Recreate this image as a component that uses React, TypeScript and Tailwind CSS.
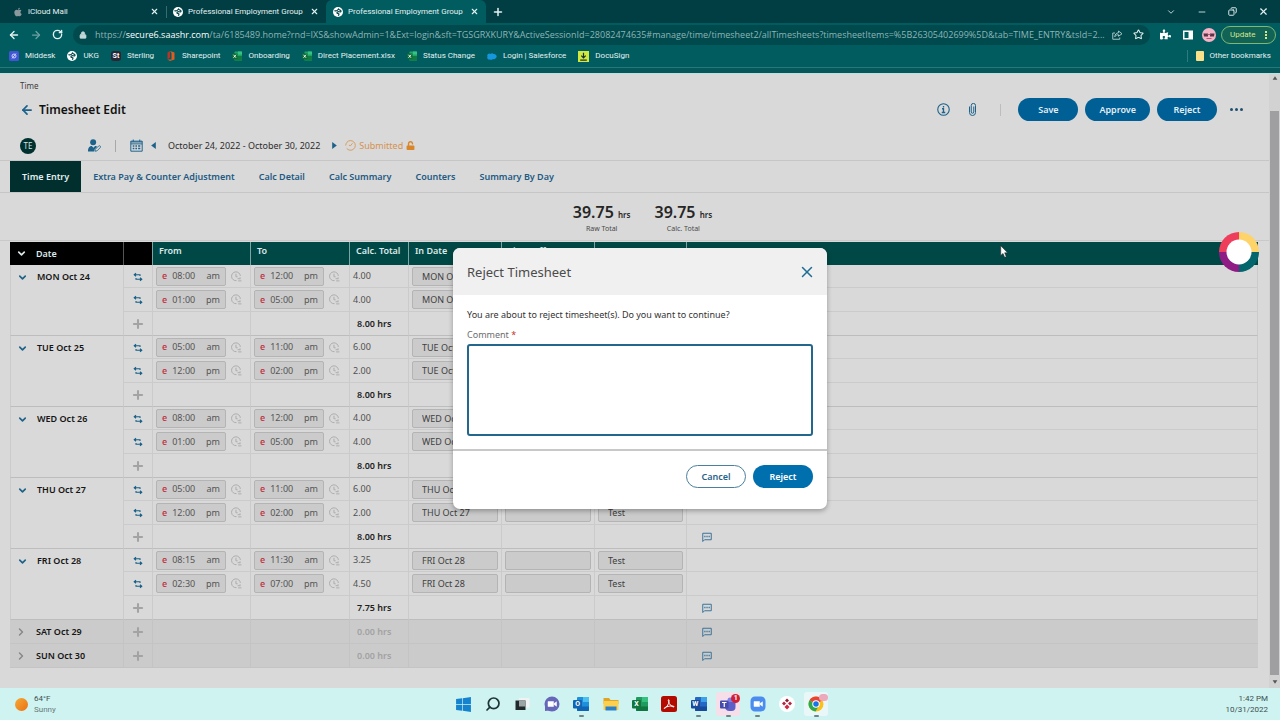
import type { ReactNode } from 'react'
import { FaApple, FaPuzzlePiece, FaUnlock, FaWindows } from 'react-icons/fa'
import {
  ArrowLeft,
  ArrowRight,
  ChevronDown,
  ChevronRight,
  Copy,
  Lock,
  Minus,
  Plus,
  RotateCw,
  Search,
  Star,
  X,
} from 'lucide-react'

type Entry = { from: string; fromHalf: string; to: string; toHalf: string; total: string }
type Day = { date: string; total: string; entries: Entry[] }

const morning = (total: string): Entry => ({ from: '08:00', fromHalf: 'am', to: '12:00', toHalf: 'pm', total })
const afternoon = (total: string): Entry => ({ from: '01:00', fromHalf: 'pm', to: '05:00', toHalf: 'pm', total })
const early = (total: string): Entry => ({ from: '05:00', fromHalf: 'am', to: '11:00', toHalf: 'am', total })
const noon = (total: string): Entry => ({ from: '12:00', fromHalf: 'pm', to: '02:00', toHalf: 'pm', total })

const days: Day[] = [
  { date: 'MON Oct 24', total: '8.00 hrs', entries: [morning('4.00'), afternoon('4.00')] },
  { date: 'TUE Oct 25', total: '8.00 hrs', entries: [early('6.00'), noon('2.00')] },
  { date: 'WED Oct 26', total: '8.00 hrs', entries: [morning('4.00'), afternoon('4.00')] },
  { date: 'THU Oct 27', total: '8.00 hrs', entries: [early('6.00'), noon('2.00')] },
  {
    date: 'FRI Oct 28',
    total: '7.75 hrs',
    entries: [
      { from: '08:15', fromHalf: 'am', to: '11:30', toHalf: 'am', total: '3.25' },
      { from: '02:30', fromHalf: 'pm', to: '07:00', toHalf: 'pm', total: '4.50' },
    ],
  },
]

const weekend = ['SAT Oct 29', 'SUN Oct 30']

const tabs = ['Time Entry', 'Extra Pay & Counter Adjustment', 'Calc Detail', 'Calc Summary', 'Counters', 'Summary By Day']

/* ── Icons ──────────────────────────────────────────── */

function Globe() {
  return (
    <svg viewBox="0 0 20 20" className="size-[10px] shrink-0">
      <circle cx="10" cy="10" r="10" fill="#fff" />
      <path d="M3 7c3 2 6 0 8-3 2 3 6 2 5 5-2 2-5-1-7 1-2 1-1 3 1 3 3 0 2 3 0 4" fill="none" stroke="#08474b" strokeWidth="2.400" />
    </svg>
  )
}

function Sheet() {
  return (
    <svg viewBox="0 0 20 20" className="size-[10px] shrink-0">
      <rect x="5" y="1" width="15" height="18" rx="1" fill="#21a366" />
      <path d="M12 1h7a1 1 0 0 1 1 1v5h-8z" fill="#33c481" />
      <path d="M5 10h15v8a1 1 0 0 1-1 1H6a1 1 0 0 1-1-1z" fill="#107c41" />
      <rect y="5" width="11" height="11" rx="1" fill="#0b6a37" />
      <path d="m3 7.500 5 6m0-6-5 6" stroke="#fff" strokeWidth="1.800" />
    </svg>
  )
}

function Swap() {
  return (
    <svg viewBox="0 0 20 20" className="size-[10px]" fill="none" stroke="#155f88" strokeWidth="2.200">
      <path d="M14 8V5.500H3M6 2.500l-3.500 3L6 8.500M6 12v2.500h11M14 11.500l3.500 3-3.500 3" />
    </svg>
  )
}

function PunchClock() {
  return (
    <svg viewBox="0 0 20 20" className="size-[11px] shrink-0" fill="none" stroke="#a9a9a9" strokeWidth="1.700">
      <path d="M10 17.500A8 8 0 1 1 17 9M9 5v5.500h3M12 14h4M13 18h6M16.500 11.500V15" />
    </svg>
  )
}

function CommentIcon() {
  return (
    <svg viewBox="0 0 20 20" className="size-[10px]" fill="none" stroke="#3c7399" strokeWidth="2">
      <path d="M1.500 19V2.500h17v13H5z" />
      <path d="M4.500 9h2.500m1.800 0h2.500m1.800 0h2.500" strokeWidth="2.800" />
    </svg>
  )
}

function InfoIcon() {
  return (
    <svg viewBox="0 0 26 26" className="size-[13px]" fill="none" stroke="#1c628a" strokeWidth="2.200">
      <circle cx="13" cy="13" r="11.500" />
      <path d="M13 6v3M10 11.500h3V19m-3.500 0h7" strokeWidth="2.600" />
    </svg>
  )
}

function ClipIcon() {
  return (
    <svg viewBox="0 0 14 26" className="h-[13px] w-[7px]" fill="none" stroke="#1c628a" strokeWidth="2">
      <path d="M9.500 7v11a2.500 2.500 0 0 1-5 0V5a4 4 0 0 1 8.500 0v14a5.500 5.500 0 0 1-12 0V7" />
    </svg>
  )
}

function CalendarIcon() {
  return (
    <svg viewBox="0 0 24 24" className="size-[13px]" fill="none" stroke="#1c628a" strokeWidth="1.800">
      <path d="M1.500 4h21v18.500h-21zM1.500 9h21M6 1v4m12-4v4M1.500 5.500h21" />
      <path d="M5 13h3m2 0h3m2 0h4M5 17.500h3m2 0h3m2 0h4" strokeWidth="2.600" />
    </svg>
  )
}

function EmployeeIcon() {
  return (
    <svg viewBox="0 0 24 24" className="size-[13px]">
      <circle cx="9.500" cy="6" r="5.500" fill="#1c628a" />
      <path d="M0 23c0-7 3-10 7-10l3 3 3-3c2 0 3 .5 4 1.500l-5 5-.5 3.500z" fill="#1c628a" />
      <path d="m13.500 19 6-6a2 2 0 0 1 3 3l-6 6-3.500.5z" fill="none" stroke="#1c628a" strokeWidth="1.500" />
    </svg>
  )
}

function SubmittedIcon() {
  return (
    <svg viewBox="0 0 24 24" className="size-[11px]" fill="none" stroke="#d6924f" strokeWidth="1.800">
      <path d="M4 5A10.500 10.500 0 1 1 3.500 18M1.500 12a10 10 0 0 1 3-7" />
      <path d="m16.500 7-4.500 5.500-3.500-1" />
    </svg>
  )
}

/* ── Browser chrome ─────────────────────────────────── */

function BrowserTab({ title, icon, active = false }: { title: string; icon: ReactNode; active?: boolean }) {
  return (
    <div className={`flex h-full w-[160px] items-center gap-[5px] px-[7px] ${active ? 'rounded-t-md bg-[#005c5f]' : ''}`}>
      {icon}
      <span className="min-w-0 flex-1 overflow-hidden whitespace-nowrap">{title}</span>
      <button type="button" aria-label="Close tab">
        <X className="size-[9px]" strokeWidth={3} />
      </button>
    </div>
  )
}

function Bookmark({ label, children }: { label: string; children: ReactNode }) {
  return (
    <a href="#" className="flex items-center gap-[6px] whitespace-nowrap">
      {children}
      {label}
    </a>
  )
}

function Browser() {
  return (
    <header className="bg-[#005c5f] font-['Roboto','Open_Sans',sans-serif] text-[8px] leading-3 text-[#e5f1f1]">
      <div className="flex h-[23px] items-center bg-[#003e44] pl-[6px]">
        <BrowserTab title="iCloud Mail" icon={<FaApple className="size-[10px] text-[#8a999b]" />} />
        <div className="-mr-px h-3 w-px bg-[#3a6b70]" />
        <BrowserTab title="Professional Employment Group" icon={<Globe />} />
        <BrowserTab title="Professional Employment Group" icon={<Globe />} active />
        <button type="button" aria-label="New tab" className="ml-[6px]">
          <Plus className="size-3" strokeWidth={3} />
        </button>
        <div className="ml-auto flex items-center gap-[21px] pr-[11px]">
          <ChevronDown className="size-[10px]" />
          <Minus className="size-[10px]" />
          <Copy className="size-[9px] -scale-x-100" strokeWidth={2.5} />
          <X className="size-[11px]" strokeWidth={2.5} />
        </div>
      </div>

      <div className="flex h-[23px] items-center pl-2 pr-1">
        <button type="button" aria-label="Back">
          <ArrowLeft className="size-3" strokeWidth={2.8} />
        </button>
        <button type="button" aria-label="Forward" className="ml-[10px] text-[#6da0a1]">
          <ArrowRight className="size-3" strokeWidth={2.5} />
        </button>
        <button type="button" aria-label="Reload" className="ml-[10px]">
          <RotateCw className="size-[11px]" strokeWidth={3} />
        </button>
        <div className="ml-[10px] flex h-5 min-w-0 flex-1 items-center rounded-full bg-[#00494d] px-[6px]">
          <Lock className="size-2 shrink-0 fill-[#c3d7d7] text-[#c3d7d7]" />
          <p className="ml-2 min-w-0 flex-1 truncate font-['Open_Sans','Noto_Sans',sans-serif] text-[9px] text-[#8db5b6]">
            https://<span className="text-white">secure6.saashr.com</span>
            /ta/6185489.home?rnd=IXS&amp;showAdmin=1&amp;Ext=login&amp;sft=TGSGRXKURY&amp;ActiveSessionId=28082474635#manage/time/timesheet2/allTimesheets?timesheetItems=%5B26305402699%5D&amp;tab=TIME_ENTRY&amp;tsId=2...
          </p>
          <svg viewBox="0 0 22 20" className="ml-1 h-[10px] w-[11px] shrink-0" fill="none" stroke="#a4c5c5" strokeWidth="2">
            <path d="M6 6H1.500v12.500h14V15M13 2l7 5.500-7 5V9.500c-4 0-6 1.500-7.500 4C6 9 8 6 13 5.500z" />
          </svg>
          <Star className="ml-[10px] size-[11px] shrink-0" strokeWidth={2.2} />
        </div>
        <FaPuzzlePiece className="ml-[10px] size-[11px] text-white" />
        <svg viewBox="0 0 20 20" className="ml-3 size-[10px]">
          <path d="M0 1h20v18H0zM3 4v12h8V4z" fill="#fff" fillRule="evenodd" />
        </svg>
        <svg viewBox="0 0 28 28" className="ml-[9px] size-[14px]">
          <circle cx="14" cy="14" r="14" fill="#f4b3c6" />
          <path d="M3 11h9v6H4zm13 0h9l-1 6h-8z" fill="#583645" />
          <path d="M11 13h6M9 21h10" stroke="#a85d75" strokeWidth="2" />
        </svg>
        <button type="button" className="ml-[5px] flex h-[18px] w-[55px] items-center justify-between rounded-full border border-[#7db875] bg-[#116356] px-2 text-[#d6e58c]">
          Update
          <svg viewBox="0 0 4 16" className="h-2 w-[2px]" fill="currentColor">
            <path d="M0 0h4v4H0zm0 6h4v4H0zm0 6h4v4H0z" />
          </svg>
        </button>
      </div>

      <nav className="flex h-[22px] items-center gap-3 border-b border-[#2a7779] px-[9px] pb-px">
        <Bookmark label="Middesk">
          <svg viewBox="0 0 20 20" className="size-[10px]">
            <rect width="20" height="20" rx="3" fill="#4255d4" />
            <path d="M6 10a4 4 0 1 0 8 0 4 4 0 1 0-8 0m0 5 8-10" fill="none" stroke="#d8dcff" strokeWidth="1.800" />
          </svg>
        </Bookmark>
        <Bookmark label="UKG">
          <Globe />
        </Bookmark>
        <Bookmark label="Sterling">
          <span className="size-[10px] rounded-[3px] bg-[#2c2535] text-center text-[7px] font-bold leading-[10px] text-white">St</span>
        </Bookmark>
        <Bookmark label="Sharepoint">
          <svg viewBox="0 0 20 20" className="size-[10px]">
            <path d="M8 0v13l-5 4V3z" fill="#b5352b" />
            <path d="m8 0 9 3v14l-9 3-5-3h8V4z" fill="#e25a1d" />
          </svg>
        </Bookmark>
        <Bookmark label="Onboarding">
          <Sheet />
        </Bookmark>
        <Bookmark label="Direct Placement.xlsx">
          <Sheet />
        </Bookmark>
        <Bookmark label="Status Change">
          <Sheet />
        </Bookmark>
        <Bookmark label="Login | Salesforce">
          <svg viewBox="0 0 20 14" className="w-[10px]">
            <path d="M5 13a4 4 0 0 1-4-6 4 4 0 0 1 6-5 4 4 0 0 1 6 0 5 5 0 0 1 4 9 5 5 0 0 1-5 1c-2 2-5 2-7 1" fill="#1497dc" />
          </svg>
        </Bookmark>
        <Bookmark label="DocuSign">
          <svg viewBox="0 0 20 20" className="size-[11px]">
            <path d="M0 0h20v20H0z" fill="#d3e83c" />
            <path d="M10 3v9M6 8.500l4 4 4-4M4 16.500h12" fill="none" stroke="#16303a" strokeWidth="2.200" />
          </svg>
        </Bookmark>
        <div className="ml-auto flex items-center border-l border-[#2f7a7c] pl-2">
          <Bookmark label="Other bookmarks">
            <span className="h-[10px] w-2 rounded-[1px] bg-[#fbe08a]" />
          </Bookmark>
        </div>
      </nav>
      <div className="h-[6px] border-b border-[#bfe0e0] bg-[#05575a]" />
    </header>
  )
}

/* ── Timesheet ──────────────────────────────────────── */

function Pill({ children }: { children: ReactNode }) {
  return (
    <button type="button" className="h-[23px] min-w-[60px] rounded-full bg-[#005f95] px-[14px] text-center font-semibold text-[#e3eef4]">
      {children}
    </button>
  )
}

function PageHeader() {
  return (
    <div>
      <div className="pl-5 pr-[26px]">
        <p className="pt-[6px] text-[8px] leading-3 text-[#3c3c3c]">Time</p>
        <div className="mt-[6px] flex items-center">
          <button type="button" aria-label="Back to list">
            <ArrowLeft className="size-[14px] text-[#1c628a]" strokeWidth={3} />
          </button>
          <h1 className="ml-[5px] text-[12px] font-semibold text-[#111]">Timesheet Edit</h1>
          <div className="ml-auto flex items-center gap-[7px]">
            <button type="button" aria-label="Information" className="mr-3">
              <InfoIcon />
            </button>
            <button type="button" aria-label="Attachments" className="mr-[17px]">
              <ClipIcon />
            </button>
            <span className="mr-[10px] h-3 w-px bg-[#bdbdbd]" />
            <Pill>Save</Pill>
            <Pill>Approve</Pill>
            <Pill>Reject</Pill>
            <button type="button" aria-label="More actions" className="ml-[6px] flex gap-[2px]">
              <span className="size-[3px] rounded-full bg-[#1f4f70]" />
              <span className="size-[3px] rounded-full bg-[#1f4f70]" />
              <span className="size-[3px] rounded-full bg-[#1f4f70]" />
            </button>
          </div>
        </div>

        <div className="mt-[11px] flex h-[27px] items-center text-[#2d2d2d]">
          <span className="mr-[52px] size-4 rounded-full bg-[#00312f] text-center text-[8px] leading-4 text-[#d4e3e2]">TE</span>
          <button type="button" aria-label="Employee">
            <EmployeeIcon />
          </button>
          <span className="mx-[14px] h-3 w-px bg-[#a8a8a8]" />
          <button type="button" aria-label="Calendar">
            <CalendarIcon />
          </button>
          <button type="button" aria-label="Previous week" className="ml-2">
            <svg viewBox="0 0 8 12" className="h-[7px] w-[5px]"><path d="M8 0v12L0 6z" fill="#1c628a" /></svg>
          </button>
          <span className="mx-3">October 24, 2022 - October 30, 2022</span>
          <button type="button" aria-label="Next week">
            <svg viewBox="0 0 8 12" className="h-[7px] w-[5px]"><path d="M0 0v12l8-6z" fill="#1c628a" /></svg>
          </button>
          <span className="ml-2 flex items-center gap-[3px] text-[#d6924f]">
            <SubmittedIcon />
            Submitted
            <FaUnlock className="size-[9px] text-[#d98628]" />
          </span>
        </div>
      </div>

      <nav className="mt-px flex h-[33px] items-stretch border-y border-[#c6c6c6] pl-[10px] font-semibold text-[#235a83]">
        {tabs.map((tab, i) => (
          <a
            key={tab}
            href="#"
            className={`flex items-center px-3 ${i === 0 ? 'bg-[#002f2e] text-[#e4eeee]' : ''}`}
          >
            {tab}
          </a>
        ))}
      </nav>

      <div className="flex h-12 items-center justify-center gap-6 border-b border-[#c9c9c9] pl-4 pt-1">
        {['Raw Total', 'Calc. Total'].map((label) => (
          <div key={label} className="text-center">
            <p className="text-[16px] font-semibold leading-[18px] text-[#262626]">
              39.75 <span className="text-[8px]">hrs</span>
            </p>
            <p className="text-[7px] leading-[10px] text-[#4a4a4a]">{label}</p>
          </div>
        ))}
      </div>
    </div>
  )
}

function TimeField({ label, time, half }: { label: string; time: string; half: string }) {
  return (
    <div className="flex items-center gap-[5px] pl-[3px]">
      <label className="flex h-[19px] w-[70px] items-center rounded-[2px] border border-[#b4b4b4] bg-[#cbcbcb] px-[5px] text-[#555]">
        <span className="font-medium text-[#c02c40]">e</span>
        <input aria-label={label} defaultValue={time} className="ml-[5px] w-7 min-w-0 flex-1" />
        <span>{half}</span>
      </label>
      <PunchClock />
    </div>
  )
}

function Field({ label, value }: { label: string; value: string }) {
  return (
    <div className="px-[3px]">
      <input
        aria-label={label}
        defaultValue={value}
        className="block h-[19px] w-full rounded-[2px] border border-[#b4b4b4] bg-[#cbcbcb] px-[9px] text-[#404040]"
      />
    </div>
  )
}

const cell = 'border-b border-r border-[#cbcbcb] p-0'

function DayRows({ day }: { day: Day }) {
  return (
    <>
      {day.entries.map((entry, i) => (
        <tr key={entry.from} className={i === 0 ? 'h-[23px]' : 'h-6'}>
          {i === 0 && (
            <td rowSpan={3} className={`${cell} border-l border-b-[#bdbdbd] align-top`}>
              <div className="flex items-center gap-[9px] pl-[6px] pt-[5px] font-semibold text-[#151515]">
                <button type="button" aria-label={`Collapse ${day.date}`}>
                  <ChevronDown className="size-[11px] text-[#1c628a]" strokeWidth={3.5} />
                </button>
                {day.date}
              </div>
            </td>
          )}
          <td className={`${cell} text-center`}>
            <button type="button" aria-label="Swap entry" className="align-middle">
              <Swap />
            </button>
          </td>
          <td className={cell}>
            <TimeField label={`${day.date} from`} time={entry.from} half={entry.fromHalf} />
          </td>
          <td className={cell}>
            <TimeField label={`${day.date} to`} time={entry.to} half={entry.toHalf} />
          </td>
          <td className={`${cell} pl-[3px] text-[#505050]`}>{entry.total}</td>
          <td className={cell}>
            <Field label="In date" value={day.date} />
          </td>
          <td className={cell}>
            <Field label="Time off" value="" />
          </td>
          <td className={cell}>
            <Field label="Cost center" value="Test" />
          </td>
          <td className={cell} />
        </tr>
      ))}
      <tr className="h-6">
        <td className={`${cell} border-b-[#bdbdbd] text-center`}>
          <button type="button" aria-label="Add entry" className="align-middle text-[#a3a3a3]">
            <Plus className="size-[14px]" strokeWidth={3.5} />
          </button>
        </td>
        <td className={`${cell} border-b-[#bdbdbd]`} />
        <td className={`${cell} border-b-[#bdbdbd]`} />
        <td className={`${cell} border-b-[#bdbdbd] pl-[7px] font-semibold text-[#1e1e1e]`}>{day.total}</td>
        <td className={`${cell} border-b-[#bdbdbd]`} />
        <td className={`${cell} border-b-[#bdbdbd]`} />
        <td className={`${cell} border-b-[#bdbdbd]`} />
        <td className={`${cell} border-b-[#bdbdbd] pl-[15px]`}>
          <button type="button" aria-label="Comments" className="block">
            <CommentIcon />
          </button>
        </td>
      </tr>
    </>
  )
}

function Timesheet() {
  const head = 'border-r border-[#7fa5a2] p-0 pb-[5px] pl-[6px] text-left font-semibold'
  return (
    <div className="relative mt-px pb-4 pl-[10px] pr-[11px]">
      <table className="w-full table-fixed border-separate border-spacing-0">
        <colgroup>
          <col className="w-[114px]" />
          <col className="w-[29px]" />
          <col className="w-[98px]" />
          <col className="w-[99px]" />
          <col className="w-[59px]" />
          <col className="w-[93px]" />
          <col className="w-[93px]" />
          <col className="w-[92px]" />
          <col />
        </colgroup>
        <thead>
          <tr className="h-[23px] bg-[#004845] text-[#dce9e8]">
            <th className="border-r border-[#555] bg-black p-0 text-left font-semibold">
              <span className="flex items-center gap-[9px] pl-[6px]">
                <ChevronDown className="size-[11px]" strokeWidth={3.5} />
                Date
              </span>
            </th>
            <th className="border-r border-[#7fa5a2] bg-black p-0" />
            <th className={head}>From</th>
            <th className={head}>To</th>
            <th className={head}>Calc. Total</th>
            <th className={head}>In Date</th>
            <th className={head}>Time Off</th>
            <th className={head} />
            <th className="p-0" />
          </tr>
        </thead>
        <tbody>
          {days.map((day) => (
            <DayRows key={day.date} day={day} />
          ))}
          {weekend.map((date) => (
            <tr key={date} className="h-6 bg-[#cbcbcb]">
              <td className="border-b border-r border-[#c4c4c4] p-0">
                <div className="flex items-center gap-[9px] pl-[5px] font-semibold text-[#151515]">
                  <button type="button" aria-label={`Expand ${date}`}>
                    <ChevronRight className="size-3 text-[#888]" strokeWidth={3} />
                  </button>
                  {date}
                </div>
              </td>
              <td className="border-b border-r border-[#c4c4c4] p-0 text-center">
                <button type="button" aria-label="Add entry" className="align-middle text-[#a3a3a3]">
                  <Plus className="size-[14px]" strokeWidth={3.5} />
                </button>
              </td>
              <td className="border-b border-r border-[#c4c4c4] p-0" />
              <td className="border-b border-r border-[#c4c4c4] p-0" />
              <td className="border-b border-r border-[#c4c4c4] p-0 pl-[7px] font-semibold text-[#a2a2a2]">0.00 hrs</td>
              <td className="border-b border-r border-[#c4c4c4] p-0" />
              <td className="border-b border-r border-[#c4c4c4] p-0" />
              <td className="border-b border-r border-[#c4c4c4] p-0" />
              <td className="border-b border-[#c4c4c4] p-0 pl-[15px]">
                <button type="button" aria-label="Comments" className="block">
                  <CommentIcon />
                </button>
              </td>
            </tr>
          ))}
        </tbody>
      </table>

      {/* Floating help wheel */}
      <button type="button" aria-label="Help" className="absolute -top-[10px] right-[10px]">
        <svg viewBox="0 0 40 40" className="size-10">
          <path d="M20 0A20 20 0 0 0 0 20h20z" fill="#ef3e5b" />
          <path d="M20 0a20 20 0 0 1 20 20H20z" fill="#fdd36a" />
          <path d="M40 20a20 20 0 0 1-20 20V20z" fill="#03666c" />
          <path d="M20 40A20 20 0 0 1 0 20h20z" fill="#8f1c85" />
          <circle cx="20" cy="20" r="12.500" fill="#fff" />
        </svg>
      </button>
    </div>
  )
}

/* ── Reject dialog ──────────────────────────────────── */

function RejectDialog() {
  return (
    <div className="absolute inset-0 flex items-start justify-center pt-[248px]">
      <div
        role="dialog"
        aria-labelledby="reject-title"
        className="w-[374px] overflow-hidden rounded-[7px] bg-white shadow-[0_2px_5px_rgba(0,0,0,0.3)]"
      >
        <div className="flex h-[47px] items-center justify-between bg-[#f0f0f0] px-[14px]">
          <h2 id="reject-title" className="text-[13px] text-[#4b4b4b]">Reject Timesheet</h2>
          <button type="button" aria-label="Close">
            <X className="-mr-[3px] size-[18px] text-[#1f6c94]" />
          </button>
        </div>
        <div className="px-[14px] pb-[13px] pt-[13px]">
          <p className="leading-[14px] text-[#333]">You are about to reject timesheet(s). Do you want to continue?</p>
          <label htmlFor="comment" className="mt-[6px] block leading-[13px] text-[#6d6d6d]">
            Comment <span className="text-[#c8322f]">*</span>
          </label>
          <textarea
            id="comment"
            className="mt-[3px] block h-[92px] w-full resize-none rounded-[3px] border-2 border-[#24678c] p-1 outline-none"
          />
        </div>
        <div className="flex justify-end gap-[7px] border-t-2 border-[#c8c8c8] px-[14px] pb-[21px] pt-[14px]">
          <button type="button" className="h-[23px] w-[60px] rounded-full border border-[#4b7f9f] font-semibold text-[#28648a]">
            Cancel
          </button>
          <button type="button" className="h-[23px] w-[60px] rounded-full bg-[#006fad] font-semibold text-white">
            Reject
          </button>
        </div>
      </div>
    </div>
  )
}

/* ── Taskbar ────────────────────────────────────────── */

function OfficeIcon({ letter, dark, mid, light }: { letter: string; dark: string; mid: string; light: string }) {
  return (
    <span className="relative block size-4">
      <svg viewBox="0 0 32 32" className="size-4">
        <rect x="8" y="2" width="24" height="28" rx="2" fill={mid} />
        <path d="M20 2h10a2 2 0 0 1 2 2v8H20z" fill={light} />
        <path d="M8 21h24v7a2 2 0 0 1-2 2H10a2 2 0 0 1-2-2z" fill={dark} />
        <rect y="8" width="18" height="17" rx="2" fill={dark} />
      </svg>
      <span className="absolute left-0 top-1 w-[9px] text-center text-[7px] font-bold leading-[9px] text-white">{letter}</span>
    </span>
  )
}

function CameraIcon({ round }: { round: boolean }) {
  return (
    <svg viewBox="0 0 32 32" className="size-4">
      <rect x="1" y="1" width="30" height="30" rx={round ? 15 : 9} fill={round ? '#6667b8' : '#4a8cf0'} />
      {round && <path d="M2 30V18l9 11z" fill="#6667b8" />}
      <path d="M8 11h11v10H8zM20 15l5-3.500v9L20 17z" fill="#fff" stroke="#fff" strokeLinejoin="round" />
    </svg>
  )
}

const apps: { name: string; running?: boolean; tint?: string; icon: ReactNode }[] = [
  { name: 'Start', icon: <FaWindows className="size-[17px] text-[#1683cf]" /> },
  { name: 'Search', icon: <Search className="size-4 -scale-x-100 text-[#1d3338]" strokeWidth={2.6} /> },
  {
    name: 'Task view',
    icon: (
      <svg viewBox="0 0 32 32" className="size-4">
        <path d="M10 4h21v19H10z" fill="#f1f3f3" />
        <path d="M3 9h20v19H3z" fill="#22292b" />
        <path d="M10 9h13v12H10z" fill="#9aa3a5" />
      </svg>
    ),
  },
  { name: 'Chat', icon: <CameraIcon round /> },
  { name: 'Outlook', running: true, icon: <OfficeIcon letter="O" dark="#0f64b4" mid="#1e8fdd" light="#4bc0ef" /> },
  {
    name: 'File Explorer',
    icon: (
      <svg viewBox="0 0 32 32" className="size-4">
        <path d="M1 4h11l3 4h16v8H1z" fill="#e0a526" />
        <path d="M1 10h30v18H1z" fill="#fbd050" />
        <path d="M5 21h22v8H5z" fill="#2a80c9" />
      </svg>
    ),
  },
  { name: 'Excel', icon: <OfficeIcon letter="X" dark="#0f7640" mid="#1f9b5f" light="#34c07d" /> },
  {
    name: 'Acrobat',
    icon: (
      <svg viewBox="0 0 32 32" className="size-4">
        <rect width="32" height="32" rx="5" fill="#b30b00" />
        <path d="M7 25c5-3 10-11 9-17-1-2-2 0-1 3 1 5 6 11 11 11 1-3-9-3-18 1-2 1-2 2-1 2z" fill="none" stroke="#fff" strokeWidth="2" />
      </svg>
    ),
  },
  { name: 'Word', running: true, icon: <OfficeIcon letter="W" dark="#174a9b" mid="#2268c4" light="#3fa0ea" /> },
  {
    name: 'Teams',
    running: true,
    tint: 'bg-[#f6dfe8]',
    icon: (
      <span className="relative block">
        <svg viewBox="0 0 32 32" className="size-4">
          <circle cx="20" cy="8" r="5" fill="#7b83eb" />
          <path d="M10 12h21v10a8 8 0 0 1-8 8h-4c-6 0-9-4-9-8z" fill="#5b5fc7" />
          <rect y="9" width="17" height="16" rx="2" fill="#444bad" />
          <path d="M4 13h9M8.500 13v9" stroke="#fff" strokeWidth="2.400" />
        </svg>
        <span className="absolute -right-1 -top-[2px] size-[9px] rounded-full bg-[#cf2039] text-center text-[7px] font-bold leading-[9px] text-white">
          1
        </span>
      </span>
    ),
  },
  { name: 'Zoom', running: true, icon: <CameraIcon round={false} /> },
  {
    name: 'Phone client',
    icon: (
      <svg viewBox="0 0 32 32" className="size-4">
        <circle cx="16" cy="16" r="16" fill="#fff" />
        <path d="m16 5 4 4-4 4-4-4z" fill="#8d1d35" />
        <path d="m10 11 4 4-4 4-4-4zm12 0 4 4-4 4-4-4z" fill="#b5243b" />
        <path d="m16 17 5 5-5 5-5-5z" fill="#d0263f" />
      </svg>
    ),
  },
  {
    name: 'Chrome',
    running: true,
    tint: 'bg-[#e9f7f8]',
    icon: (
      <span className="relative block">
        <svg viewBox="0 0 32 32" className="size-4">
          <circle cx="16" cy="16" r="15" fill="#fbc116" />
          <path d="M16 16 3 8.500a15 15 0 0 1 26 0z" fill="#ea4335" />
          <path d="M16 16 3 8.500A15 15 0 0 0 15 31l7-12z" fill="#2da94f" />
          <circle cx="16" cy="16" r="7.500" fill="#fff" />
          <circle cx="16" cy="16" r="5.500" fill="#1a73e8" />
        </svg>
        <span className="absolute -right-1 -top-[2px] h-[7px] w-[9px] rounded-full bg-[#eba9bb]" />
      </span>
    ),
  },
]

function Taskbar() {
  return (
    <footer className="grid h-8 grid-cols-[1fr_382px_1fr] items-center bg-[#cff3f1] font-['Roboto','Open_Sans',sans-serif] text-[8px] leading-[11px] text-[#3c4f50]">
      <div className="flex items-center gap-[6px] pl-[15px]">
        <span className="size-[13px] rounded-full bg-gradient-to-br from-[#f6a935] to-[#ea6f10]" />
        <div>
          <p>64°F</p>
          <p className="text-[#66797a]">Sunny</p>
        </div>
      </div>
      <div className="flex h-full items-center">
        {apps.map((app) => (
          <div key={app.name} className="relative flex h-full flex-1 items-center justify-center">
            <button
              type="button"
              aria-label={app.name}
              className={`flex size-6 items-center justify-center rounded-[3px] ${app.tint ?? ''}`}
            >
              {app.icon}
            </button>
            {app.running && <span className="absolute bottom-[3px] h-[2px] w-[5px] rounded-full bg-[#6d8586]" />}
          </div>
        ))}
      </div>
      <div className="pr-3 text-right">
        <p>1:42 PM</p>
        <p>10/31/2022</p>
      </div>
    </footer>
  )
}

export default function App() {
  return (
    <div className="relative flex min-h-screen flex-col bg-[#d9d9d9] font-['Noto_Sans','Open_Sans',sans-serif] text-[9px] leading-[14px]">
      <Browser />
      <div className="flex flex-1">
        <main className="min-w-0 flex-1">
          <PageHeader />
          <Timesheet />
        </main>
        {/* Page scrollbar */}
        <div className="flex w-[11px] flex-col items-center justify-between bg-[#d2d2d2] text-[#555]">
          <svg viewBox="0 0 10 10" className="mt-px size-[6px]"><path d="m5 2 4 6H1z" fill="currentColor" /></svg>
          <div className="mb-1 mt-[30px] w-[9px] flex-1 bg-[#9f9fa1]" />
          <svg viewBox="0 0 10 10" className="mb-[3px] size-[6px]"><path d="m5 8 4-6H1z" fill="currentColor" /></svg>
        </div>
      </div>
      <Taskbar />
      <RejectDialog />
      <svg viewBox="0 0 12 20" className="pointer-events-none absolute left-[1000px] top-[245px] h-[13px] w-2">
        <path d="M1 1v15l3.500-3 2.500 6 2.500-1-2.500-6H11.500z" fill="#fff" stroke="#222" strokeWidth=".8" />
      </svg>
    </div>
  )
}
